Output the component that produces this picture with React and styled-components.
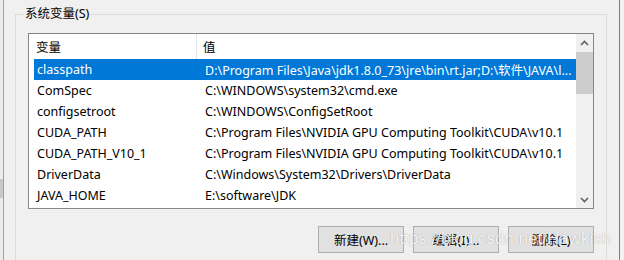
import React from "react";
import styled, { createGlobalStyle } from "styled-components";

const GlobalStyle = createGlobalStyle`
  html, body {
    margin: 0;
    padding: 0;
    background: #f0f0f0;
  }
  body {
    font-family: "Noto Sans", "Noto Sans CJK SC", sans-serif;
    font-size: 12.5px;
    color: #000;
  }
`;

const Page = styled.div`
  position: relative;
  width: 624px;
  height: 260px;
  display: flex;
  flex-direction: row;
  overflow: hidden;
  background: #f0f0f0;
`;
const LeftEdge = styled.div`
  width: 3px;
  border-right: 1px solid #a0a0a0;
  background: linear-gradient(
    to bottom,
    #ececec 0 179px,
    #c8c8c8 179px 198px,
    #ececec 198px
  );
`;
const RightEdge = styled.div`
  width: 4px;
  border-left: 1px solid #7d7d7d;
  background: #f2f2f2;
`;
const Main = styled.div`
  flex: 1;
  display: flex;
  padding: 14px 12px 0 11px;
`;
const Group = styled.div`
  position: relative;
  flex: 1;
  display: flex;
  flex-direction: column;
  border: 1px solid #dcdcdc;
  border-bottom: none;
  padding: 18px 12px 0 12px;
`;
const Legend = styled.span`
  position: absolute;
  top: -9px;
  left: 8px;
  padding: 0 1px;
  line-height: 16px;
  background: #f0f0f0;
`;
const ListBox = styled.div`
  display: flex;
  height: 174px;
  border: 1px solid #828790;
  background: #fff;
`;
const Table = styled.div`
  flex: 1;
  display: flex;
  flex-direction: column;
  overflow: hidden;
`;
const Header = styled.div`
  display: flex;
  height: 25px;
  align-items: stretch;
`;
const HeadCell = styled.div`
  display: flex;
  align-items: center;
  padding-left: ${(p) => (p.first ? "7px" : "6px")};
  width: ${(p) => (p.first ? "168px" : "auto")};
  flex: ${(p) => (p.first ? "none" : "1")};
  border-right: ${(p) => (p.first ? "1px solid #e5e5e5" : "none")};
  box-sizing: border-box;
`;
const Rows = styled.div`
  padding-left: 5px;
`;
const Row = styled.div`
  display: flex;
  height: 21px;
  align-items: center;
  white-space: nowrap;
  background: ${(p) => (p.selected ? "#0078d7" : "transparent")};
  color: ${(p) => (p.selected ? "#fff" : "#000")};
`;
const NameCell = styled.div`
  width: 163px;
  padding-left: 3px;
  box-sizing: border-box;
  flex: none;
`;
const ValueCell = styled.div`
  flex: 1;
  padding-left: 8px;
  overflow: hidden;
`;
const ScrollBar = styled.div`
  width: 17px;
  display: flex;
  flex-direction: column;
  background: #f0f0f0;
`;
const ArrowBox = styled.div`
  height: 17px;
  display: flex;
  align-items: center;
  justify-content: center;
  color: #606060;
`;
const Thumb = styled.div`
  height: 42px;
  margin-top: 1px;
  background: #cdcdcd;
`;
const Track = styled.div`
  flex: 1;
`;
const ButtonRow = styled.div`
  display: flex;
  justify-content: flex-end;
  gap: 9px;
  margin-top: 17px;
`;
const Button = styled.button`
  width: 86px;
  height: 27px;
  padding: 0;
  background: #e1e1e1;
  border: 1px solid #adadad;
  font-family: inherit;
  font-size: 12.5px;
  color: #000;
`;
const Watermark = styled.div`
  position: absolute;
  left: 390px;
  top: 229px;
  font-family: "Liberation Sans", Arial, sans-serif;
  font-size: 17px;
  color: rgba(255, 255, 255, 0.9);
  text-shadow: 0 0 1px rgba(0, 0, 0, 0.35);
  pointer-events: none;
`;

const vars = [
  ["classpath", "D:\\Program Files\\Java\\jdk1.8.0_73\\jre\\bin\\rt.jar;D:\\软件\\JAVA\\l..."],
  ["ComSpec", "C:\\WINDOWS\\system32\\cmd.exe"],
  ["configsetroot", "C:\\WINDOWS\\ConfigSetRoot"],
  ["CUDA_PATH", "C:\\Program Files\\NVIDIA GPU Computing Toolkit\\CUDA\\v10.1"],
  ["CUDA_PATH_V10_1", "C:\\Program Files\\NVIDIA GPU Computing Toolkit\\CUDA\\v10.1"],
  ["DriverData", "C:\\Windows\\System32\\Drivers\\DriverData"],
  ["JAVA_HOME", "E:\\software\\JDK"],
];

function Chevron({ up }) {
  return (
    <svg width="9" height="6" viewBox="0 0 9 6">
      <path
        d={up ? "M1 5 L4.5 1.5 L8 5" : "M1 1 L4.5 4.5 L8 1"}
        fill="none"
        stroke="currentColor"
        strokeWidth="1.6"
      />
    </svg>
  );
}

export default function App() {
  return (
    <React.Fragment>
      <GlobalStyle />
      <Page>
        <LeftEdge />
        <Main>
          <Group>
            <Legend>系统变量(S)</Legend>
            <ListBox>
              <Table>
                <Header>
                  <HeadCell first>变量</HeadCell>
                  <HeadCell>值</HeadCell>
                </Header>
                <Rows>
                  {vars.map(([name, value], i) => (
                    <Row key={name} selected={i === 0}>
                      <NameCell>{name}</NameCell>
                      <ValueCell>{value}</ValueCell>
                    </Row>
                  ))}
                </Rows>
              </Table>
              <ScrollBar>
                <ArrowBox>
                  <Chevron up />
                </ArrowBox>
                <Thumb />
                <Track />
                <ArrowBox>
                  <Chevron />
                </ArrowBox>
              </ScrollBar>
            </ListBox>
            <ButtonRow>
              <Button>新建(W)...</Button>
              <Button>编辑(I)...</Button>
              <Button>删除(L)</Button>
            </ButtonRow>
          </Group>
        </Main>
        <RightEdge />
        <Watermark>https://blog.csdn.net/Hawkish</Watermark>
      </Page>
    </React.Fragment>
  );
}
